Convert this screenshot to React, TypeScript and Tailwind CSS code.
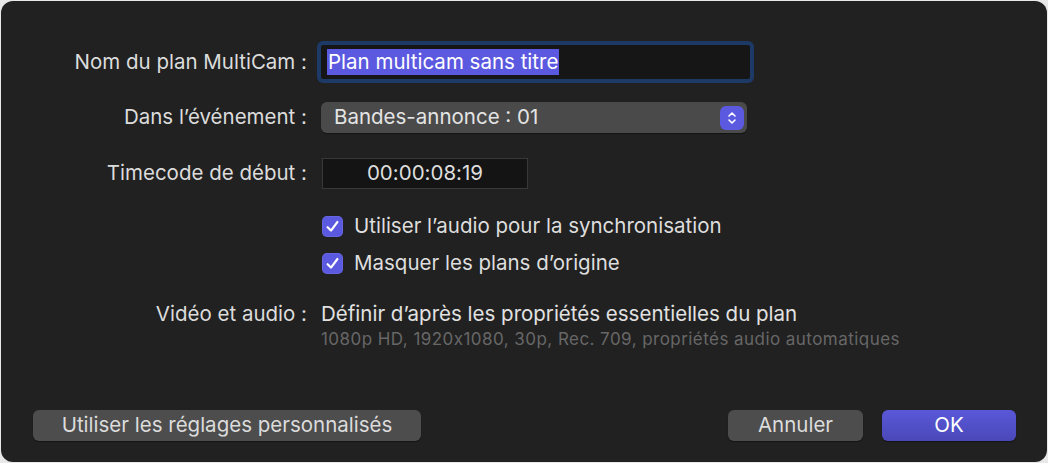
import React from "react";

function Check() {
  return (
    <div className="w-[21px] h-[21px] rounded-[5px] bg-[#5b59e0] flex items-center justify-center shadow-[inset_0_0_0_1px_rgba(255,255,255,0.08)]">
      <svg width="15" height="15" viewBox="0 0 14 14" fill="none">
        <path d="M2.4 7.6 L5.6 10.8 L11.6 2.8" stroke="white" strokeWidth="2" strokeLinecap="round" strokeLinejoin="round" />
      </svg>
    </div>
  );
}

export default function App() {
  const font = { fontFamily: "Inter, 'Noto Sans', 'Liberation Sans', sans-serif" };
  return (
    <div className="w-[1048px] h-[463px] bg-[#e8e8e8] pt-[1px] pl-[1px]" style={font}>
      <div className="w-[1046px] h-[461px] rounded-[12px] bg-[#212121] flex flex-col pt-[40px] pb-[21px] pl-[32px] pr-[31px] text-[20.5px] text-[#dcdcdc]">
        {/* Row 1 */}
        <div className="flex items-center h-[42px]">
          <div className="w-[274px] text-right leading-none whitespace-nowrap">Nom du plan MultiCam :</div>
          <div className="ml-[10px] w-[437px] h-[42px] rounded-[6px] bg-[#1d3a66] p-[4px]">
            <div className="w-full h-full bg-[#161616] rounded-[2px] flex items-center pl-[6px]">
              <span className="bg-[#5b59e0] text-white px-[1px] leading-[26px] h-[26px] whitespace-nowrap">Plan multicam sans titre</span>
            </div>
          </div>
        </div>
        {/* Row 2 */}
        <div className="flex items-center h-[31px] mt-[19px]">
          <div className="w-[274px] text-right leading-none whitespace-nowrap">Dans l’événement :</div>
          <div className="ml-[14px] w-[426px] h-[31px] rounded-[6px] bg-[#4a4a4a] flex items-center pl-[13px] pr-[3px] shadow-[0_1px_1px_rgba(0,0,0,0.4)]">
            <span className="flex-1 text-[#e4e4e4] whitespace-nowrap">Bandes-annonce : 01</span>
            <div className="w-[24px] h-[24px] rounded-[6px] bg-[#5b59e0] flex items-center justify-center">
              <svg width="12" height="16" viewBox="0 0 12 16" fill="none">
                <path d="M3 6 L6 3 L9 6" stroke="white" strokeWidth="1.6" strokeLinecap="round" strokeLinejoin="round" />
                <path d="M3 10 L6 13 L9 10" stroke="white" strokeWidth="1.6" strokeLinecap="round" strokeLinejoin="round" />
              </svg>
            </div>
          </div>
        </div>
        {/* Row 3 */}
        <div className="flex items-center h-[31px] mt-[25px]">
          <div className="w-[274px] text-right leading-none whitespace-nowrap">Timecode de début :</div>
          <div className="ml-[15px] w-[206px] h-[31px] bg-[#141414] border border-[#383838] flex items-center justify-center text-[#dedede] [font-feature-settings:'calt'_0]">
            00:00:08:19
          </div>
        </div>
        {/* Checkboxes */}
        <div className="flex items-center h-[22px] mt-[26px] pl-[289px]">
          <Check />
          <span className="ml-[11px] text-[#dedede] whitespace-nowrap">Utiliser l’audio pour la synchronisation</span>
        </div>
        <div className="flex items-center h-[22px] mt-[15px] pl-[289px]">
          <Check />
          <span className="ml-[11px] text-[#dedede] whitespace-nowrap">Masquer les plans d’origine</span>
        </div>
        {/* Video et audio */}
        <div className="flex items-center h-[22px] mt-[29px]">
          <div className="w-[274px] text-right leading-none whitespace-nowrap">Vidéo et audio :</div>
          <div className="ml-[14px] text-[#e2e2e2] whitespace-nowrap">Définir d’après les propriétés essentielles du plan</div>
        </div>
        <div className="h-[18px] mt-[5px] pl-[288px] text-[17px] tracking-[0.45px] leading-[18px] text-[#676767] whitespace-nowrap [font-feature-settings:'calt'_0]">
          1080p HD, 1920x1080, 30p, Rec. 709, propriétés audio automatiques
        </div>
        {/* Buttons */}
        <div className="mt-auto flex items-center">
          <button className="w-[388px] h-[31px] rounded-[6px] bg-[#4d4d4d] text-[#dcdcdc] shadow-[0_1px_1px_rgba(0,0,0,0.4)] whitespace-nowrap">
            Utiliser les réglages personnalisés
          </button>
          <div className="flex-1" />
          <button className="w-[135px] h-[31px] rounded-[6px] bg-[#4d4d4d] text-[#dcdcdc] shadow-[0_1px_1px_rgba(0,0,0,0.4)]">
            Annuler
          </button>
          <button className="ml-[19px] w-[134px] h-[31px] rounded-[6px] bg-gradient-to-b from-[#5a58d8] to-[#4a48b8] text-white shadow-[0_1px_1px_rgba(0,0,0,0.4)]">
            OK
          </button>
        </div>
      </div>
    </div>
  );
}
